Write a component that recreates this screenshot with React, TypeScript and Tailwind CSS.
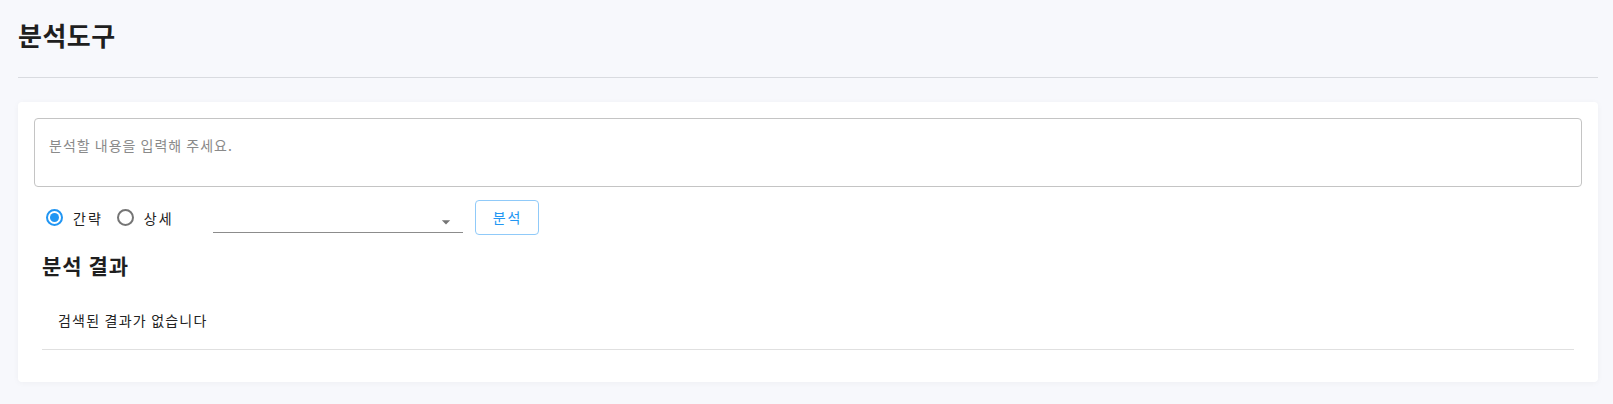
import { useState } from "react";

function Radio({ checked, label, onClick }: { checked: boolean; label: string; onClick: () => void }) {
  return (
    <label className="flex items-center cursor-pointer" onClick={onClick}>
      <span
        className={
          "flex h-[17px] w-[17px] items-center justify-center rounded-full border-2 " +
          (checked ? "border-[#2196f3]" : "border-[#757575]")
        }
      >
        {checked && <span className="h-[9px] w-[9px] rounded-full bg-[#2196f3]" />}
      </span>
      <span className="ml-[10px] text-[14px] leading-5 tracking-[2px] text-[#222]">{label}</span>
    </label>
  );
}

export default function App() {
  const [mode, setMode] = useState<"short" | "detail">("short");

  return (
    <div className="min-h-[404px] bg-[#f7f8fc] pl-[18px] pr-[15px] pt-[17px] font-['Noto_Sans_CJK_KR','Noto_Sans',sans-serif] text-[#222]">
      <h1 className="text-[26px] font-bold leading-[36px] tracking-[0.5px] text-[#1f1f1f]">분석도구</h1>
      <div className="mt-[24px] h-px bg-[#d9dbe0]" />

      <div className="mt-[24px] rounded-[4px] bg-white p-4 shadow-[0_1px_6px_rgba(0,0,0,0.04)]">
        {/* 입력 */}
        <textarea
          className="block h-[69px] w-full resize-none rounded-[4px] border border-[#c4c4c4] px-[14px] pt-[16px] text-[14px] leading-5 tracking-[1px] outline-none placeholder:text-[#8a8a8a]"
          placeholder="분석할 내용을 입력해 주세요."
        />

        {/* 옵션 */}
        <div className="mt-[13px] flex h-[35px] items-center pl-[12px]">
          <Radio checked={mode === "short"} label="간략" onClick={() => setMode("short")} />
          <div className="ml-[14px]">
            <Radio checked={mode === "detail"} label="상세" onClick={() => setMode("detail")} />
          </div>
          <div className="relative ml-[39px] h-[33px] w-[250px] self-start border-b border-[#8c8c8c]">
            <svg
              className="absolute right-[7px] top-[12px] h-[20px] w-[20px] fill-[#757575]"
              viewBox="0 0 24 24"
            >
              <path d="M7 10l5 5 5-5z" />
            </svg>
          </div>
          <button className="ml-[12px] h-[35px] w-[64px] rounded-[4px] border border-[#90caf9] pl-[2px] text-[14px] tracking-[2px] text-[#2196f3]">
            분석
          </button>
        </div>

        {/* 결과 */}
        <div className="px-2">
          <h2 className="mt-[16px] text-[21px] font-bold leading-[28px] tracking-[1px] text-[#1f1f1f]">분석 결과</h2>
          <div className="mt-[31px] pl-4 text-[14px] leading-5 tracking-[1.2px] text-[#222]">검색된 결과가 없습니다</div>
          <div className="mt-[19px] h-px bg-[#e0e0e0]" />
        </div>
        <div className="h-[16px]" />
      </div>
    </div>
  );
}
